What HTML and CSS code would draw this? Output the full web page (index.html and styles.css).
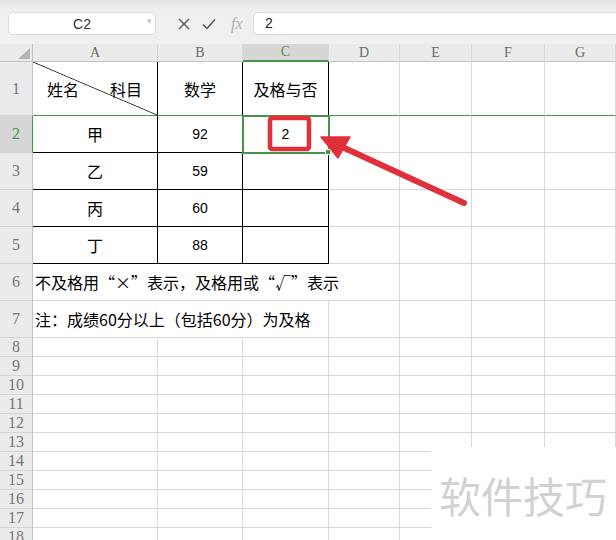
FILE: index.html
```html
<!DOCTYPE html>
<html lang="zh-CN">
<head>
    <meta charset="UTF-8" />
    <title>成绩表</title>
    <link rel="stylesheet" href="styles.css">
</head>
<body>
<div class="app">
    <div class="toolbar">
        <div class="namebox">
            <span>C2</span>
            <span class="caret">▾</span>
        </div>
        <div class="tools">
            <svg class="icon" viewBox="0 0 12 12" width="12" height="12">
                <path d="M1 1 L11 11 M11 1 L1 11" stroke="#555" stroke-width="1.4" fill="none"/>
            </svg>
            <svg class="icon" viewBox="0 0 14 12" width="14" height="12">
                <path d="M1 6.5 L5 10.5 L13 1.5" stroke="#555" stroke-width="1.5" fill="none"/>
            </svg>
            <span class="fx">fx</span>
        </div>
        <div class="formula">2</div>
    </div>

    <div class="sheet">
        <!-- column headers -->
        <div class="h corner">
            <svg viewBox="0 0 12 11" width="12" height="11"><polygon points="0,11 12,11 12,0" fill="#b5b5b5"/></svg>
        </div>
        <div class="h">A</div>
        <div class="h">B</div>
        <div class="h active">C</div>
        <div class="h">D</div>
        <div class="h">E</div>
        <div class="h">F</div>
        <div class="h">G</div>

        <!-- 1 -->
        <div class="r hl-bottom">1</div>
        <div class="c t hl-bottom diag"><span>姓名</span><span>科目</span></div>
        <div class="c t hl-bottom">数学</div>
        <div class="c t hl-bottom">及格与否</div>
        <div class="c hl-bottom"></div>
        <div class="c hl-bottom"></div>
        <div class="c hl-bottom"></div>
        <div class="c hl-bottom"></div>

        <!-- 2 -->
        <div class="r active">2</div>
        <div class="c t">甲</div>
        <div class="c t num">92</div>
        <div class="c t num sel">2</div>
        <div class="c"></div><div class="c"></div><div class="c"></div><div class="c"></div>

        <!-- 3 -->
        <div class="r">3</div>
        <div class="c t">乙</div>
        <div class="c t num">59</div>
        <div class="c t"></div>
        <div class="c"></div><div class="c"></div><div class="c"></div><div class="c"></div>

        <!-- 4 -->
        <div class="r">4</div>
        <div class="c t">丙</div>
        <div class="c t num">60</div>
        <div class="c t"></div>
        <div class="c"></div><div class="c"></div><div class="c"></div><div class="c"></div>

        <!-- 5 -->
        <div class="r">5</div>
        <div class="c t">丁</div>
        <div class="c t num">88</div>
        <div class="c t"></div>
        <div class="c"></div><div class="c"></div><div class="c"></div><div class="c"></div>

        <!-- 6 -->
        <div class="r">6</div>
        <div class="c nr note">不及格用“×”表示，及格用或“√”表示</div>
        <div class="c nr"></div>
        <div class="c nr"></div>
        <div class="c"></div><div class="c"></div><div class="c"></div><div class="c"></div>

        <!-- 7 -->
        <div class="r">7</div>
        <div class="c nr note">注：成绩60分以上（包括60分）为及格</div>
        <div class="c nr"></div>
        <div class="c"></div>
        <div class="c"></div><div class="c"></div><div class="c"></div><div class="c"></div>

        <!-- 8 - 18 -->
        <div class="r s">8</div><div class="c"></div><div class="c"></div><div class="c"></div><div class="c"></div><div class="c"></div><div class="c"></div><div class="c"></div>
        <div class="r s">9</div><div class="c"></div><div class="c"></div><div class="c"></div><div class="c"></div><div class="c"></div><div class="c"></div><div class="c"></div>
        <div class="r s">10</div><div class="c"></div><div class="c"></div><div class="c"></div><div class="c"></div><div class="c"></div><div class="c"></div><div class="c"></div>
        <div class="r s">11</div><div class="c"></div><div class="c"></div><div class="c"></div><div class="c"></div><div class="c"></div><div class="c"></div><div class="c"></div>
        <div class="r s">12</div><div class="c"></div><div class="c"></div><div class="c"></div><div class="c"></div><div class="c"></div><div class="c"></div><div class="c"></div>
        <div class="r s">13</div><div class="c"></div><div class="c"></div><div class="c"></div><div class="c"></div><div class="c"></div><div class="c"></div><div class="c"></div>
        <div class="r s">14</div><div class="c"></div><div class="c"></div><div class="c"></div><div class="c"></div><div class="c"></div><div class="c"></div><div class="c"></div>
        <div class="r s">15</div><div class="c"></div><div class="c"></div><div class="c"></div><div class="c"></div><div class="c"></div><div class="c"></div><div class="c"></div>
        <div class="r s">16</div><div class="c"></div><div class="c"></div><div class="c"></div><div class="c"></div><div class="c"></div><div class="c"></div><div class="c"></div>
        <div class="r s">17</div><div class="c"></div><div class="c"></div><div class="c"></div><div class="c"></div><div class="c"></div><div class="c"></div><div class="c"></div>
        <div class="r s">18</div><div class="c"></div><div class="c"></div><div class="c"></div><div class="c"></div><div class="c"></div><div class="c"></div><div class="c"></div>
    </div>

    <!-- red annotation -->
    <svg class="marks" viewBox="0 0 616 540" width="616" height="540">
        <rect x="270" y="118" width="39" height="31" rx="2" fill="none" stroke="#e0313b" stroke-width="4.5"/>
        <line x1="464" y1="203" x2="340" y2="146" stroke="#e0313b" stroke-width="6" stroke-linecap="round"/>
        <polygon points="321,137 350,137 338,158" fill="#e0313b" stroke="#e0313b" stroke-width="1.5" stroke-linejoin="round"/>
    </svg>

    <div class="watermark">软件技巧</div>
</div>
</body>
</html>
```

FILE: styles.css
```css
:root {
    --green: #4a944a;
    --grid: #d9d9d9;
    --head-bg: #ebebeb;
    --head-line: #cdcdcd;
    --red: #e0313b;
}
body {
    margin: 0;
    background: #fff;
    font-family: "Noto Sans CJK SC", sans-serif;
}
.app {
    position: relative;
    width: 616px;
    height: 540px;
    overflow: hidden;
}
.toolbar {
    height: 44px;
    box-sizing: border-box;
    padding-top: 12px;
    display: flex;
    align-items: flex-start;
    background: linear-gradient(#e4e4e4, #f0f0f0 10px);
}
.namebox {
    margin-left: 8px;
    width: 148px;
    height: 23px;
    box-sizing: border-box;
    background: #fff;
    border: 1px solid #dcdcdc;
    border-radius: 5px;
    display: flex;
    align-items: center;
    justify-content: center;
    position: relative;
    font-family: "Liberation Sans", sans-serif;
    font-size: 14px;
    color: #333;
}
.caret {
    position: absolute;
    right: 3px;
    top: 3px;
    font-size: 9px;
    color: #c4c4c4;
}
.tools {
    width: 97px;
    height: 23px;
    display: flex;
    align-items: center;
    padding-left: 22px;
    box-sizing: border-box;
}
.tools .icon {
    margin-right: 12px;
}
.tools .icon + .icon {
    margin-right: 15px;
}
.fx {
    font-family: "Liberation Serif", serif;
    font-style: italic;
    font-size: 16px;
    color: #b0b0b0;
}
.formula {
    flex: 1;
    height: 23px;
    box-sizing: border-box;
    background: #fff;
    border: 1px solid #dcdcdc;
    border-right: none;
    border-radius: 5px 0 0 5px;
    padding-left: 11px;
    font-family: "Liberation Sans", sans-serif;
    font-size: 14px;
    line-height: 21px;
    color: #222;
}

.sheet {
    display: grid;
    grid-template-columns: 33px 125px 85px 86px 71px 72px 73px 1fr;
    grid-template-rows: 18px 54px repeat(6, 37px) repeat(11, 19px);
}
.sheet > div {
    box-sizing: border-box;
    border-right: 1px solid var(--grid);
    border-bottom: 1px solid var(--grid);
    display: flex;
    align-items: center;
    justify-content: center;
}
.h {
    background: var(--head-bg);
    border-right-color: #dadada !important;
    border-bottom-color: #c4c4c4 !important;
    font-family: "Liberation Serif", serif;
    font-size: 14px;
    color: #6a6a6a;
}
.h.active {
    background: #d6d6d6;
    color: var(--green);
    border-bottom: 2px solid var(--green) !important;
}
.h.corner {
    justify-content: flex-end;
    align-items: flex-end;
    padding: 0 2px 2px 0;
    border-right-color: #c4c4c4 !important;
}
.r {
    background: var(--head-bg);
    border-right-color: #c4c4c4 !important;
    border-bottom-color: #d4d4d4 !important;
    font-family: "Liberation Serif", serif;
    font-size: 16px;
    color: #777;
}
.r.s {
    font-size: 16px;
    line-height: 18px;
}
.r.active {
    background: #d6d6d6;
    color: var(--green);
    border-right: 1px solid var(--green) !important;
}
.c {
    font-size: 16px;
    color: #000;
}
.c.t {
    border-right-color: #000;
    border-bottom-color: #000;
}
.c.num {
    font-family: "Liberation Sans", sans-serif;
    font-size: 14px;
}
.sheet > .hl-bottom {
    border-bottom-color: var(--green);
}
.diag {
    justify-content: space-between !important;
    padding: 0 15px 0 14px;
    background: linear-gradient(to top right, transparent calc(50% - 0.8px), #222 50%, transparent calc(50% + 0.8px));
}
.sel {
    position: relative;
    outline: 2px solid var(--green);
    outline-offset: -1px;
}
.sel::after {
    content: "";
    position: absolute;
    right: -3px;
    bottom: -3px;
    width: 4px;
    height: 4px;
    background: var(--green);
    border: 1px solid #fff;
}
.sheet > .nr {
    border-right-color: transparent;
}
.note {
    justify-content: flex-start !important;
    padding-left: 2px;
    white-space: nowrap;
    overflow: visible;
}
.marks {
    position: absolute;
    left: 0;
    top: 0;
    pointer-events: none;
}
.watermark {
    position: absolute;
    left: 431px;
    top: 447px;
    right: 0;
    bottom: 0;
    background: #fff;
    padding: 20px 0 0 8px;
    font-size: 42px;
    line-height: 56px;
    color: #d2d2d2;
    white-space: nowrap;
}
```
